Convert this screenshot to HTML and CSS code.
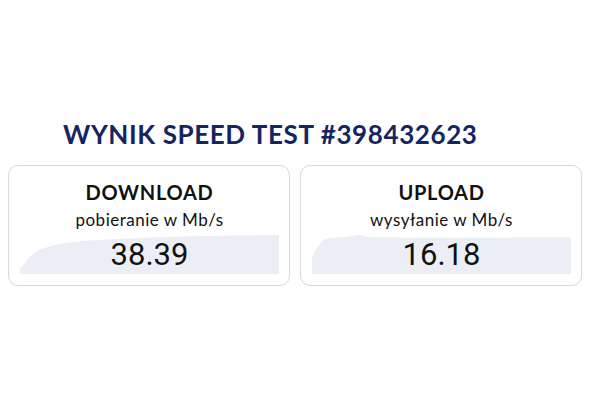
FILE: index.html
```html
<!DOCTYPE html>
<html lang="pl">
<head>
<meta charset="utf-8">
<title>Wynik Speed Test</title>
<link rel="stylesheet" href="styles.css">
</head>
<body>
<main class="page">
  <h1 class="title">WYNIK SPEED TEST #398432623</h1>
  <div class="cards">
    <section class="card">
      <h2 class="card-title">DOWNLOAD</h2>
      <p class="card-sub">pobieranie w Mb/s</p>
      <div class="chart">
        <svg class="chart-bg" viewBox="0 0 259 39" preserveAspectRatio="none">
          <path d="M0 34 C4 30 7 24 12 20 C18 15 26 12 35 10 C50 7 70 5 95 4 C130 2.5 170 1.2 200 0.8 L259 0 L259 39 L0 39 Z" fill="#eceef6"/>
        </svg>
        <span class="value">38.39</span>
      </div>
    </section>
    <section class="card">
      <h2 class="card-title">UPLOAD</h2>
      <p class="card-sub">wysyłanie w Mb/s</p>
      <div class="chart">
        <svg class="chart-bg" viewBox="0 0 259 39" preserveAspectRatio="none">
          <path d="M0 22 C4 14 8 7 13 4 C20 3 28 2.5 35 2 C40 1 44 0 47 0 C51 0 54 2 58 2.2 C70 2.6 90 2.4 110 2.8 C140 2.6 170 3 200 2.6 C225 2.3 245 2.6 259 2.4 L259 39 L0 39 Z" fill="#eceef6"/>
        </svg>
        <span class="value">16.18</span>
      </div>
    </section>
  </div>
</main>
</body>
</html>
```

FILE: styles.css
```css
* { box-sizing: border-box; }
html, body { margin: 0; padding: 0; background: #ffffff; }
body { font-family: "Lato", "Liberation Sans", sans-serif; color: #111; }

.page {
  width: 596px;
  height: 416px;
  padding: 117px 14px 0 8px;
}

.title {
  margin: 0 0 14px 55px;
  font-size: 26px;
  line-height: 34px;
  font-weight: 700;
  color: #14255f;
  letter-spacing: 0.6px;
}

.cards {
  display: grid;
  grid-template-columns: 282px 282px;
  column-gap: 10px;
}

.card {
  height: 121px;
  border: 1px solid #d9d9dd;
  border-radius: 10px;
  padding: 12px 10px 10px 11px;
  display: flex;
  flex-direction: column;
  align-items: center;
}

.card-title {
  margin: 0;
  font-size: 20px;
  line-height: 28px;
  font-weight: 700;
  letter-spacing: 0.7px;
  color: #111;
}

.card-sub {
  margin: 2px 0 0;
  font-size: 17px;
  line-height: 24px;
  font-weight: 400;
  letter-spacing: 0.5px;
  color: #111;
}

.chart {
  position: relative;
  width: 259px;
  height: 39px;
  margin-top: 3px;
  display: flex;
  align-items: center;
  justify-content: center;
}

.chart-bg {
  position: absolute;
  left: 0;
  top: 0;
  width: 100%;
  height: 100%;
}

.value {
  position: relative;
  font-family: "Roboto", "Liberation Sans", sans-serif;
  font-size: 31px;
  line-height: 39px;
  font-weight: 400;
  color: #111;
}
```
